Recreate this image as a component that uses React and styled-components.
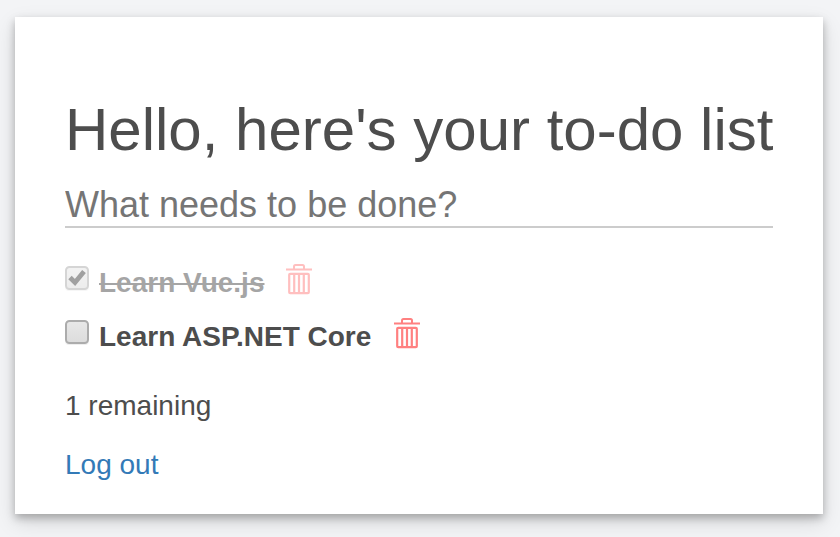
import React from "react";
import styled, { createGlobalStyle } from "styled-components";

const Global = createGlobalStyle`
  * { box-sizing: border-box; }
  html { background: #f3f4f6; }
  body { margin: 0; color: #4d4d4d; font-family: "Liberation Sans", Arial, sans-serif; font-size: 28px; line-height: 40px; }
`;

const Page = styled.div`
  height: 537px;
  padding: 17px 17px 23px 15px;
  overflow: hidden;
`;

const Card = styled.main`
  height: 497px;
  padding: 80px 50px 0;
  background: #fff;
  box-shadow: 0 4px 8px rgba(0, 0, 0, 0.25), 0 8px 20px rgba(0, 0, 0, 0.13);
`;

const Title = styled.h1`
  margin: 0;
  font-size: 60px;
  line-height: 66px;
  font-weight: 400;
  white-space: nowrap;
`;

const NewTodo = styled.input`
  display: block;
  width: 100%;
  height: 45px;
  margin-top: 20px;
  padding: 1px 0 0;
  border: 0;
  border-bottom: 2px solid #ccc;
  border-radius: 0;
  outline: 0;
  background: transparent;
  font: 36px "Liberation Sans", Arial, sans-serif;
  &::placeholder { color: #757575; opacity: 1; }
`;

const TodoList = styled.ul`
  margin: 28px 0 0;
  padding: 0;
  list-style: none;
`;

const TodoItem = styled.li`
  display: flex;
  height: 54px;
  opacity: ${(p) => (p.$done ? 0.5 : 1)};
`;

const Box = styled.svg`
  flex: none;
  width: 28px;
  height: 32px;
  margin: 8px 4px 0 -2px;
`;

const Label = styled.label`
  margin: 7px 0 0 4px;
  font-weight: 700;
  text-decoration: ${(p) => (p.$done ? "line-through 2px" : "none")};
  text-decoration-skip-ink: none;
`;

const Trash = styled.svg`
  flex: none;
  width: 28px;
  height: 34px;
  margin: 6px 0 0 ${(p) => (p.$done ? 21 : 22)}px;
  color: #ff8080;
`;

const Remaining = styled.p`
  margin: 22px 0 0;
`;

const Logout = styled.a`
  display: block;
  margin-top: 19px;
  color: #337ab7;
  text-decoration: none;
`;

function Checkbox({ checked }) {
  return (
    <Box viewBox="0 0 28 32" fill="none" role="checkbox" aria-checked={checked}>
      <defs>
        <linearGradient id="face" x1="0" y1="0" x2="0" y2="1">
          <stop offset="0" stopColor="#e8e8e8" />
          <stop offset="1" stopColor="#dcdcdc" />
        </linearGradient>
      </defs>
      <rect x="2" y="4" width="24" height="23" rx="4" fill="#eeeeee" />
      <rect x="3" y="3" width="22" height="22" rx="3.5" fill="url(#face)" stroke="#acacac" strokeWidth="2" />
      {checked && <path d="M7 13.5l5 5L21 7.5" stroke="#444" strokeWidth="4.8" />}
    </Box>
  );
}

function TrashIcon({ done }) {
  return (
    <Trash $done={done} viewBox="0 0 28 34" fill="none" stroke="currentColor" strokeWidth="2">
      <path d="M1 7.5h26M9 7V4.5q0-1.5 1.5-1.5h7q1.5 0 1.5 1.5V7" />
      <rect x="4.2" y="11.8" width="19.6" height="19.4" rx="1" strokeWidth="2.2" />
      <path d="M9.2 12v19M14 12v19M18.8 12v19" strokeWidth="2.2" />
    </Trash>
  );
}

const todos = [
  { text: "Learn Vue.js", done: true },
  { text: "Learn ASP.NET Core", done: false },
];

export default function App() {
  return (
    <>
      <Global />
      <Page>
        <Card>
          <Title>Hello, here's your to-do list</Title>
          <NewTodo placeholder="What needs to be done?" />
          <TodoList>
            {todos.map((t) => (
              <TodoItem key={t.text} $done={t.done}>
                <Checkbox checked={t.done} />
                <Label $done={t.done}>{t.text}</Label>
                <TrashIcon done={t.done} />
              </TodoItem>
            ))}
          </TodoList>
          <Remaining>1 remaining</Remaining>
          <Logout href="#">Log out</Logout>
        </Card>
      </Page>
    </>
  );
}
